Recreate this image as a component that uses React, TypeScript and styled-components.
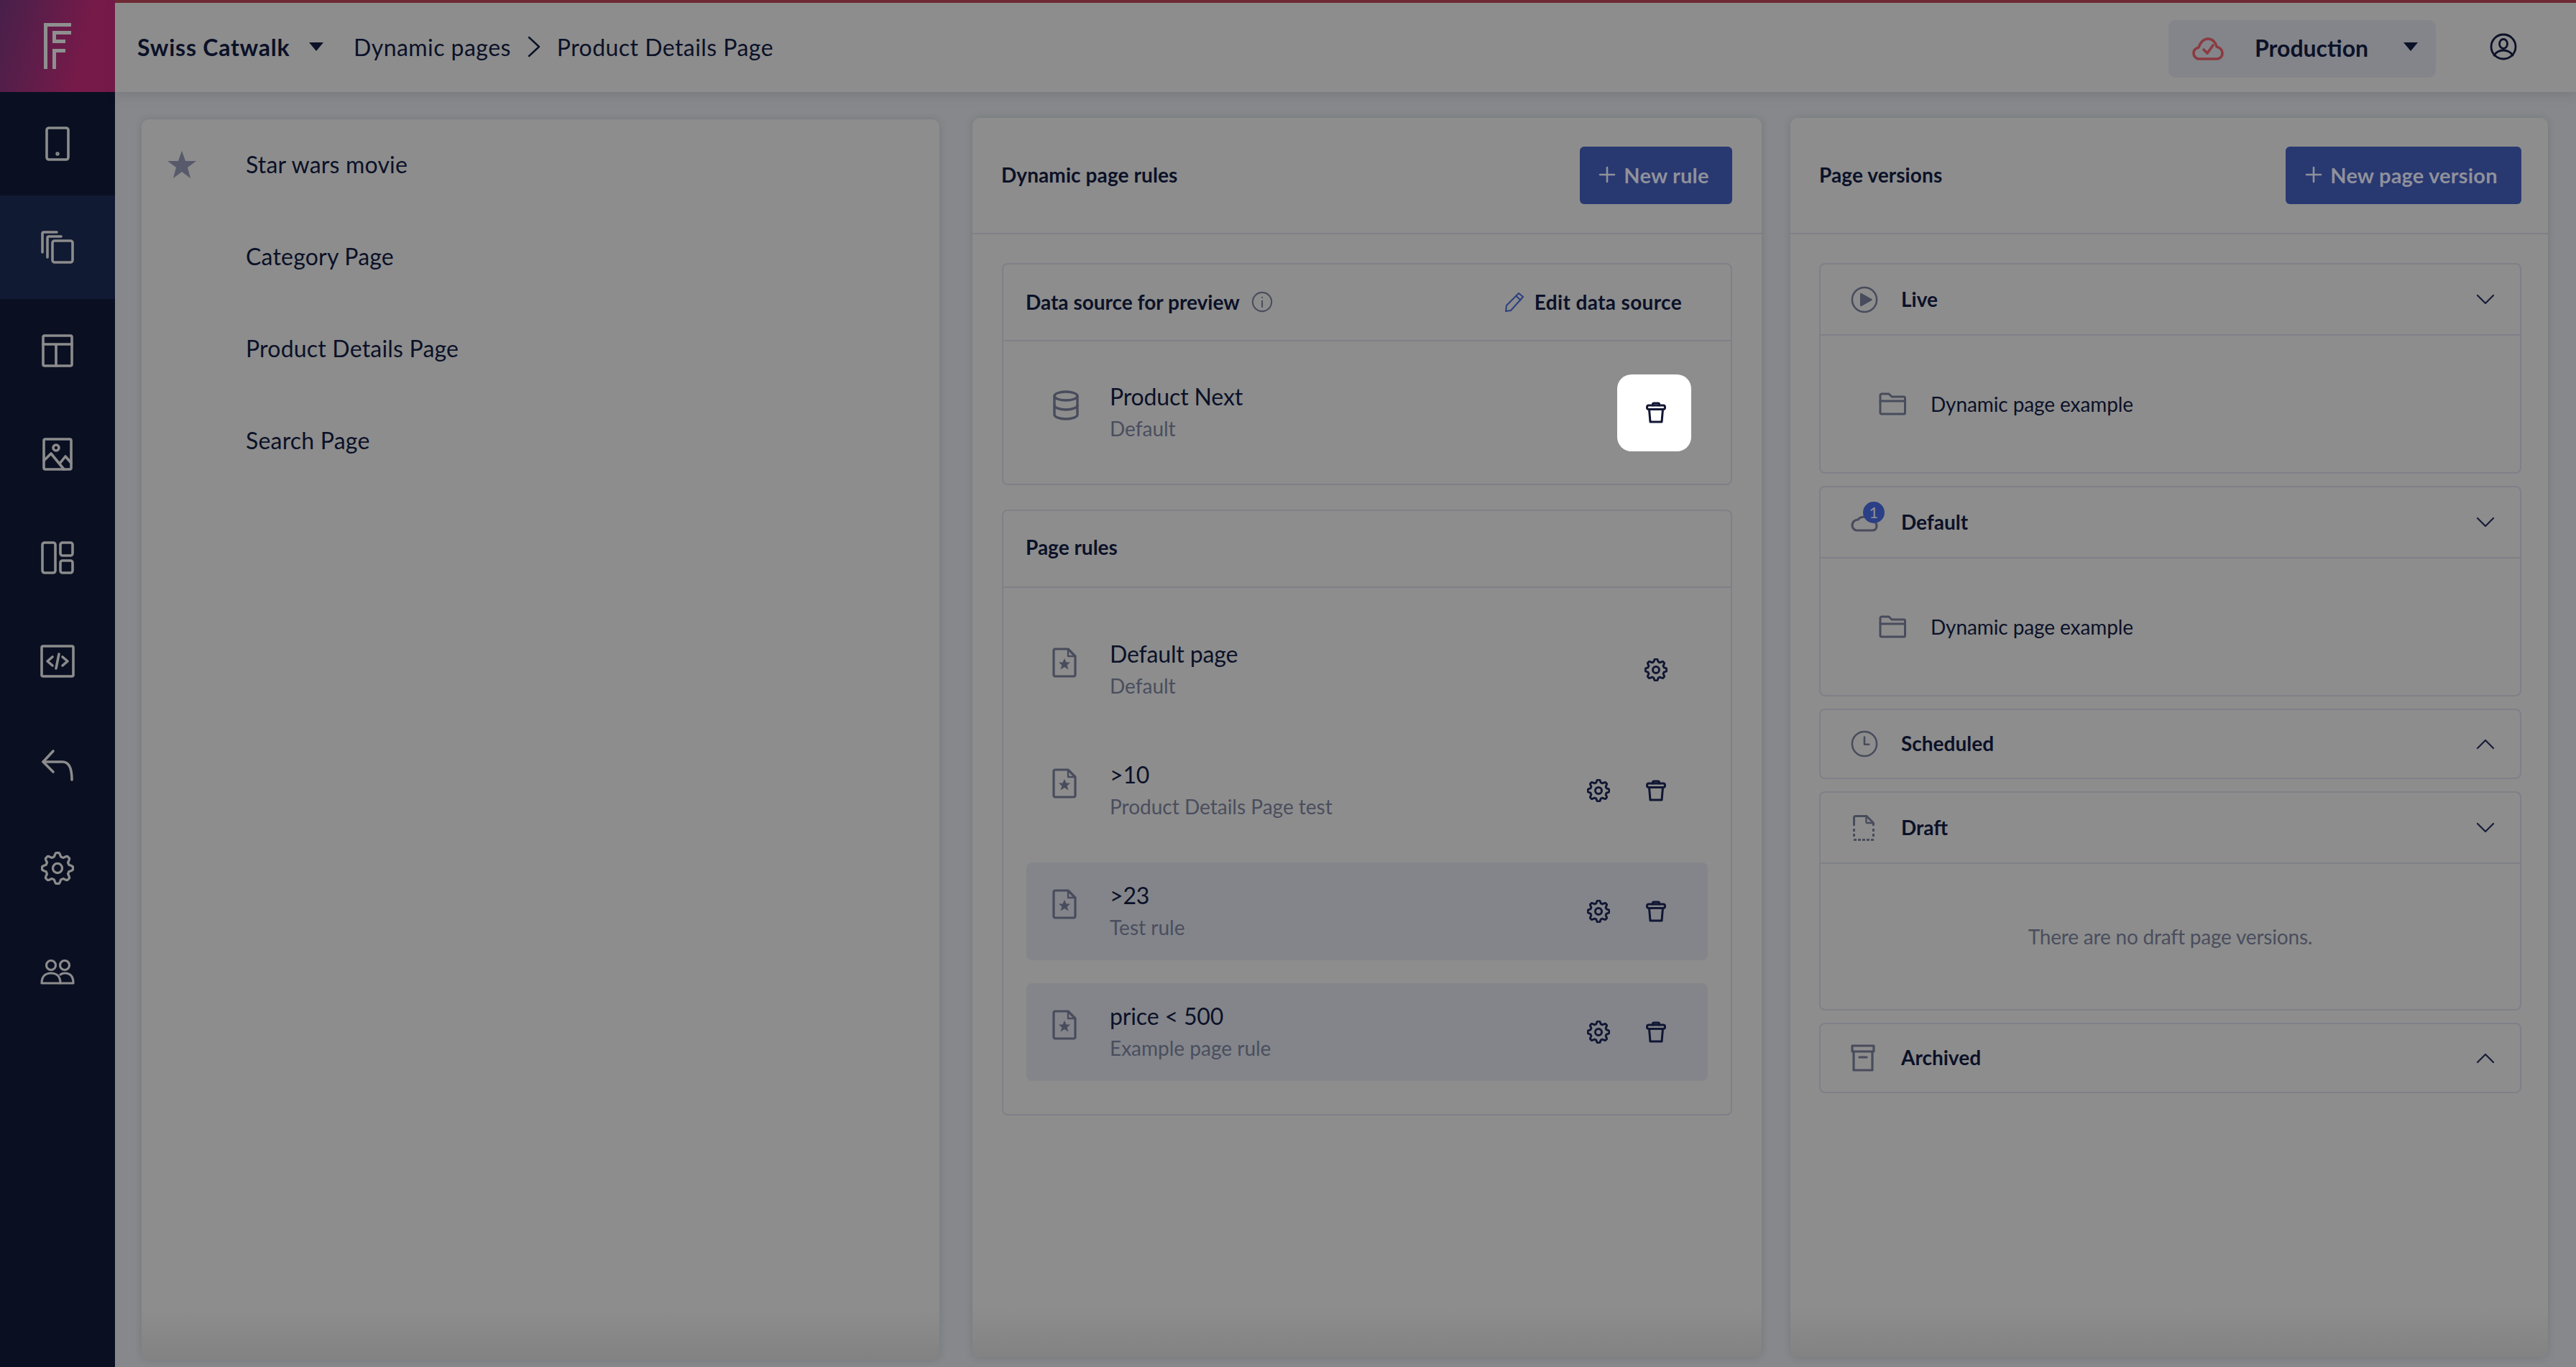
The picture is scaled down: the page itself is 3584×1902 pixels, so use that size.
import React from 'react';
import styled, { createGlobalStyle } from 'styled-components';

const GlobalStyle = createGlobalStyle`
  html, body { margin: 0; padding: 0; height: 100%; }
  body { font-family: Lato, "Noto Sans", sans-serif; background: #86888b; color: #0b1128; }
  #root { height: 100%; }
  * { box-sizing: border-box; }
`;

const Shell = styled.div`
  display: flex;
  width: 3584px;
  height: 1902px;
  overflow: hidden;
  background: #86888b;
`;

const Sidebar = styled.nav`
  flex: 0 0 160px;
  display: flex;
  flex-direction: column;
  background: #0a1022;
`;

const LogoBox = styled.div`
  height: 128px;
  display: flex;
  align-items: center;
  justify-content: center;
  background: linear-gradient(105deg, #47204a 0%, #761a49 70%);
`;

const NavItem = styled.div<{ $active?: boolean }>`
  height: 144px;
  display: flex;
  align-items: center;
  justify-content: center;
  color: #8c8c8c;
  background: ${p => (p.$active ? '#111a33' : 'transparent')};
`;

const Content = styled.div`
  flex: 1;
  display: flex;
  flex-direction: column;
  min-width: 0;
`;

const TopBar = styled.header`
  height: 128px;
  flex: none;
  display: flex;
  align-items: center;
  padding: 3px 82px 5px 31px;
  background: #8d8d8d;
  border-top: 4px solid #6e2a34;
  box-shadow: 0 4px 14px rgba(60, 62, 70, 0.18);
  position: relative;
`;

const Brand = styled.span`
  font-size: 32px;
  font-weight: 700;
  letter-spacing: 0.75px;
  width: 239px;
`;

const Caret = styled.i`
  width: 0;
  height: 0;
  border-left: 10px solid transparent;
  border-right: 10px solid transparent;
  border-top: 12px solid #0b1128;
`;

const EnvCaret = styled(Caret)`
  margin-bottom: 6px;
`;

const Crumb = styled.span<{ $first?: boolean }>`
  font-size: 32px;
  letter-spacing: 0.45px;
  margin-left: ${p => (p.$first ? 42 : 0)}px;
`;

const CrumbSep = styled.span`
  display: flex;
  padding: 0 23px;
  color: #0b1128;
`;

const Spacer = styled.div`
  flex: 1;
`;

const EnvPicker = styled.div`
  width: 372px;
  height: 80px;
  display: flex;
  align-items: center;
  margin: 6px 75px 0 0;
  padding: 0 25px 0 33px;
  border-radius: 10px;
  background: #83858a;
`;

const EnvIcon = styled.span`
  display: flex;
  color: #8b3a40;
`;

const EnvName = styled.span`
  flex: 1;
  margin: 0 0 4px 43px;
  font-size: 32px;
  font-weight: 700;
`;

const Main = styled.main`
  flex: 1;
  min-height: 0;
  display: grid;
  grid-template-columns: 1110px 1144px 1094px;
  padding: 36px 0 10px 37px;
`;

const Card = styled.section`
  background: linear-gradient(#8d8d8d calc(100% - 70px), #828282 100%);
  border-radius: 10px;
  box-shadow: 0 0 10px rgba(60, 62, 70, 0.22);
  display: flex;
  flex-direction: column;
`;

const PagesCard = styled(Card)`
  margin-top: 2px;
`;

const RulesCard = styled(Card)`
  margin: 0 0 3px 46px;
`;

const VersionsCard = styled(Card)`
  margin: 0 0 3px 40px;
`;

const PageRow = styled.div`
  height: 128px;
  display: flex;
  align-items: center;
  font-size: 32px;
  letter-spacing: 0.2px;
  padding: 0 0 3px 36px;
`;

const StarSlot = styled.span`
  flex: 0 0 109px;
  display: flex;
  color: #565a6b;
`;

const CardHead = styled.div<{ $padRight: number; $padLeft: number }>`
  height: 162px;
  flex: none;
  display: flex;
  align-items: center;
  justify-content: space-between;
  padding: 0 ${p => p.$padRight}px 0 ${p => p.$padLeft}px;
  border-bottom: 2px solid #7f8088;
`;

const CardTitle = styled.h2`
  margin: 0 0 2px;
  font-size: 28px;
  font-weight: 700;
  letter-spacing: 0.1px;
`;

const PrimaryButton = styled.div<{ $width: number }>`
  width: ${p => p.$width}px;
  height: 80px;
  display: flex;
  align-items: center;
  justify-content: center;
  gap: 11px;
  padding: 0 6px 2px 0;
  border-radius: 6px;
  background: #283871;
  color: #8f919b;
  font-size: 29px;
  font-weight: 700;
  letter-spacing: 0.2px;
`;

const RulesBody = styled.div`
  padding: 40px 41px 0;
  display: flex;
  flex-direction: column;
  gap: 34px;
`;

const Box = styled.div`
  border: 2px solid #7f8088;
  border-radius: 8px;
`;

const BoxHead = styled.div<{ $lift?: number }>`
  height: 105px;
  display: flex;
  align-items: center;
  padding: 0 68px ${p => p.$lift ?? 2}px 31px;
  font-size: 28px;
  font-weight: 700;
`;

const BoxBody = styled.div<{ $pad: number }>`
  display: flex;
  flex-direction: column;
  gap: 32px;
  padding: ${p => p.$pad}px 32px;
  border-top: 2px solid #7f8088;
`;

const InfoIcon = styled.span`
  display: flex;
  margin-left: 16px;
  color: #4a4e5e;
`;

const EditLink = styled.span`
  margin-left: auto;
  display: flex;
  align-items: center;
  gap: 14px;
  letter-spacing: 0.35px;
`;

const PencilTint = styled.span`
  display: flex;
  color: #2b3f80;
`;

const Row = styled.div<{ $selected?: boolean; $tight?: boolean }>`
  height: 136px;
  display: flex;
  align-items: center;
  padding: 0 ${p => (p.$tight ? 23 : 52)}px 0 36px;
  border-radius: 8px;
  background: ${p => (p.$selected ? '#83858a' : 'transparent')};
`;

const RowIcon = styled.span`
  flex: 0 0 80px;
  display: flex;
  color: #484c5c;
  margin-bottom: 20px;
`;

const RowText = styled.div`
  flex: 1;
  display: flex;
  flex-direction: column;
`;

const RowName = styled.div`
  font-size: 32px;
  line-height: 44px;
  letter-spacing: -0.15px;
`;

const RowSub = styled.div`
  font-size: 28px;
  line-height: 44px;
  color: #4a4e5e;
`;

const RowActions = styled.div`
  display: flex;
  align-items: center;
  gap: 40px;
`;

const ActionSlot = styled.span`
  width: 40px;
  display: flex;
  justify-content: center;
  color: #111733;
`;

const HighlightedTrash = styled.span`
  width: 103px;
  height: 107px;
  display: flex;
  align-items: center;
  justify-content: center;
  padding-left: 4px;
  border-radius: 20px;
  background: #fff;
  color: #111733;
`;

const VersionsBody = styled.div`
  padding: 40px 37px 0 40px;
  display: flex;
  flex-direction: column;
  gap: 17px;
`;

const HeadLabel = styled.span`
  flex: 1;
  font-size: 28px;
  font-weight: 700;
  padding-bottom: 2px;
`;

const AccordionHead = styled.div<{ $collapsed?: boolean }>`
  height: ${p => (p.$collapsed ? 94 : 97)}px;
  display: flex;
  align-items: center;
  padding: 0 35px 0 42px;
`;

const AccordionIcon = styled.span<{ $inset?: number }>`
  flex: 0 0 70px;
  display: flex;
  position: relative;
  padding-left: ${p => p.$inset ?? 0}px;
  color: #484c5c;
`;

const Badge = styled.span`
  position: absolute;
  left: 17px;
  top: -16px;
  width: 30px;
  height: 30px;
  display: flex;
  align-items: center;
  justify-content: center;
  border-radius: 50%;
  background: #2b3f86;
  color: #8f919b;
  font-size: 22px;
`;

const AccordionBody = styled.div<{ $height: number; $centered?: boolean }>`
  height: ${p => p.$height}px;
  display: flex;
  align-items: center;
  justify-content: ${p => (p.$centered ? 'center' : 'flex-start')};
  padding-left: ${p => (p.$centered ? 0 : 81)}px;
  border-top: 2px solid #7f8088;
`;

const FolderSlot = styled.span`
  flex: 0 0 72px;
  display: flex;
  color: #484c5c;
`;

const FolderLabel = styled.span`
  font-size: 28px;
  letter-spacing: -0.1px;
`;

const EmptyText = styled.div`
  font-size: 28px;
  letter-spacing: -0.2px;
  color: #4a4e5e;
`;

const ChevronSlot = styled.span`
  display: flex;
  color: #161c38;
`;

type IconProps = { size?: number; w?: number; h?: number; sw?: number; children: React.ReactNode; box?: string };

const Ico = ({ size = 32, w, h, sw = 2, children, box = '0 0 24 24' }: IconProps) => (
  <svg
    width={w ?? size}
    height={h ?? size}
    viewBox={box}
    fill="none"
    stroke="currentColor"
    strokeWidth={sw}
    strokeLinecap="round"
    strokeLinejoin="round"
  >
    {children}
  </svg>
);

const Logo = () => (
  <svg width="38" height="64" viewBox="0 0 38 64" fill="none" stroke="#8f8f8f" strokeWidth="5">
    <path d="M2.5 64V2.5H38" />
    <path d="M38 13.5H14.5V25.5H30" />
    <path d="M14.5 64V38.5H30" />
  </svg>
);

const PhoneIcon = () => (
  <Ico w={34} h={48} box="0 0 34 48" sw={3.6}>
    <rect x="2" y="2" width="30" height="44" rx="3" />
    <circle cx="17" cy="38" r="0.9" fill="currentColor" />
  </Ico>
);

const CopiesIcon = () => (
  <Ico w={46} h={46} box="0 0 46 46" sw={3.6}>
    <path d="M2 30V4a2 2 0 0 1 2-2H22" />
    <path d="M9 37V10a2 2 0 0 1 2-2H28" />
    <rect x="16" y="14" width="28" height="30" rx="3" />
  </Ico>
);

const LayoutIcon = () => (
  <Ico w={44} h={46} box="0 0 44 46" sw={3.6}>
    <rect x="2" y="2" width="40" height="42" rx="2" />
    <path d="M2 14H42M20 14V44" />
  </Ico>
);

const ImageIcon = () => (
  <Ico w={42} h={46} box="0 0 42 46" sw={3.6}>
    <rect x="2" y="2" width="38" height="42" rx="2" />
    <circle cx="19" cy="14" r="4" />
    <path d="M2 32L12 22L30 44M24 36L32 26L40 35" />
  </Ico>
);

const PanelsIcon = () => (
  <Ico w={46} h={46} box="0 0 46 46" sw={3.6}>
    <rect x="2" y="2" width="18" height="42" rx="3" />
    <rect x="27" y="2" width="17" height="18" rx="3" />
    <rect x="27" y="27" width="17" height="17" rx="3" />
  </Ico>
);

const CodeIcon = () => (
  <Ico w={48} h={46} box="0 0 48 46" sw={3.6}>
    <rect x="2" y="2" width="44" height="42" rx="2" />
    <path d="M17 17L10 23L17 29M31 17L38 23L31 29M26 13L22 33" />
  </Ico>
);

const ReplyIcon = () => (
  <Ico w={46} h={46} box="0 0 46 46" sw={3.6}>
    <path d="M17 4L3 19L17 33" />
    <path d="M3 19H30C38 19 43 26 43 44" />
  </Ico>
);

// cog outline with eight rounded teeth, sampled around the centre
const gearPath = (() => {
  const pts: string[] = [];
  for (let i = 0; i < 128; i++) {
    const t = (i / 128) * Math.PI * 2;
    const wave = Math.max(-1, Math.min(1, 1.5 * Math.cos(8 * t)));
    const r = 9.9 + 1.3 * wave;
    pts.push(`${(12 + r * Math.sin(t)).toFixed(2)} ${(12 - r * Math.cos(t)).toFixed(2)}`);
  }
  return `M${pts.join('L')}Z`;
})();

const GearIcon = ({ size = 46, sw = 1.7 }: { size?: number; sw?: number }) => (
  <Ico size={size} sw={sw}>
    <path d={gearPath} />
    <circle cx="12" cy="12" r="3.4" />
  </Ico>
);

const UsersIcon = () => (
  <Ico w={48} h={36} box="0 0 48 36" sw={3.2}>
    <circle cx="15" cy="9" r="6.5" />
    <circle cx="34" cy="9" r="6.5" />
    <path d="M2 34C2 24 8 20 15 20C22 20 28 24 28 34Z" />
    <path d="M28 22C30 20.5 32 20 34 20C41 20 46 24 46 34H28" />
  </Ico>
);

const StarIcon = () => (
  <svg width="40" height="38" viewBox="0 0 40 38" fill="currentColor">
    <path d="M20 0L25 14H40L28 23L32 38L20 29L8 38L12 23L0 14H15Z" />
  </svg>
);

const ChevronRight = () => (
  <Ico w={18} h={30} box="0 0 18 30" sw={2.4}>
    <path d="M2 2L16 15L2 28" />
  </Ico>
);

const PlusIcon = () => (
  <Ico size={24} sw={2.6}>
    <path d="M12 2V22M2 12H22" />
  </Ico>
);

const CloudCheck = () => (
  <Ico w={44} h={32} box="0 0 44 32" sw={3.6}>
    <path d="M10 30C5 30 2 26 2 22C2 18 5 15 9 14C11 7 16 2 22 2C28 2 33 7 34 13C39 14 42 18 42 22C42 27 38 30 34 30Z" />
    <path d="M16 17L21 22L29 11" />
  </Ico>
);

const UserCircle = () => (
  <Ico w={38} h={38} box="0 0 38 38" sw={2.8}>
    <circle cx="19" cy="19" r="17" />
    <ellipse cx="19" cy="15" rx="5.5" ry="6.5" />
    <path d="M6 31C10 25 14 24 19 24C24 24 28 25 32 31" />
  </Ico>
);

const InfoGlyph = () => (
  <Ico size={30} sw={1.7}>
    <circle cx="12" cy="12" r="10.5" />
    <path d="M12 11V17.5M12 7V7.2" />
  </Ico>
);

const PencilIcon = () => (
  <PencilTint>
    <Ico w={28} h={28} box="0 0 28 28" sw={2}>
      <path d="M20 2L26 7L9 26L2 27L3 19Z" />
      <path d="M16.5 6L22.5 11.5" />
    </Ico>
  </PencilTint>
);

const DbIcon = () => (
  <Ico w={38} h={42} box="0 0 38 42" sw={3.4}>
    <ellipse cx="19" cy="8" rx="16" ry="6" />
    <path d="M3 8V34C3 37 10 40 19 40C28 40 35 37 35 34V8" />
    <path d="M3 21C3 24 10 27 19 27C28 27 35 24 35 21" />
  </Ico>
);

const TrashIcon = () => (
  <Ico w={28} h={30} box="0 0 28 30" sw={3}>
    <path d="M9.5 5V3.5A1.5 1.5 0 0 1 11 2H17A1.5 1.5 0 0 1 18.5 3.5V5" />
    <rect x="1.5" y="5" width="25" height="5.5" rx="2.5" />
    <path d="M4.5 10.5L6 28H22L23.5 10.5" />
  </Ico>
);

const DocStar = () => (
  <svg width="34" height="42" viewBox="0 0 34 42" fill="none" stroke="currentColor" strokeWidth="3.2" strokeLinejoin="round">
    <path d="M2 4C2 3 3 2 4 2H22L32 12V38C32 39 31 40 30 40H4C3 40 2 39 2 38Z" />
    <path d="M22 2V12H32" strokeWidth="2.4" />
    <path d="M17 15L19.5 20.5H25L20.6 24.5L22.5 30.5L17 27L11.500 30.5L13.4 24.5L9 20.5H14.5Z" fill="currentColor" stroke="none" />
  </svg>
);

const PlayCircle = () => (
  <Ico size={38} sw={1.6}>
    <circle cx="12" cy="12" r="10.8" />
    <path d="M9 7L18 12L9 17Z" fill="currentColor" />
  </Ico>
);

const CloudPlain = () => (
  <Ico w={38} h={26} box="0 0 38 26" sw={3.2}>
    <path d="M9 24C5 24 2 21 2 17C2 12 6 9 10 9C14 4 22 4 26 9C32 9 36 13 36 18C36 22 33 24 30 24Z" />
  </Ico>
);

const FolderIcon = () => (
  <Ico w={38} h={32} box="0 0 38 32" sw={3}>
    <path d="M2 4C2 3 3 2 4 2H14L18 6H35C36 6 36.5 7 36.5 8V28C36.5 29.5 36 30 35 30H4C3 30 2 29.5 2 28Z" />
    <path d="M2 12H36.5" />
  </Ico>
);

const ClockIcon = () => (
  <Ico size={38} sw={1.6}>
    <circle cx="12" cy="12" r="10.8" />
    <path d="M12 6V12.5H16" />
  </Ico>
);

const DraftIcon = () => (
  <svg width="30" height="36" viewBox="0 0 30 36" fill="none" stroke="currentColor" strokeWidth="3">
    <path d="M1.5 15V3.5A2 2 0 0 1 3.5 1.5H19L28.5 11V15" />
    <path d="M18.5 2V9.5A1.5 1.5 0 0 0 20 11H28" strokeWidth="2.4" />
    <path d="M1.5 19V23M1.5 26V30M28.5 19V23M28.5 26V30" />
    <path d="M1 34.5H5M7 34.5H11M13 34.5H17M19 34.5H23M25 34.5H29" />
  </svg>
);

const ArchiveIcon = () => (
  <Ico w={34} h={38} box="0 0 34 38" sw={3.2}>
    <rect x="2" y="2" width="30" height="8" />
    <path d="M4 10V36H30V10M12 18H22" />
  </Ico>
);

const Chevron = ({ up }: { up?: boolean }) => (
  <ChevronSlot>
    <Ico w={26} h={16} box="0 0 26 16" sw={2.2}>
      <path d={up ? 'M2 14L13 3L24 14' : 'M2 2L13 13L24 2'} />
    </Ico>
  </ChevronSlot>
);

const navIcons = [
  <PhoneIcon />, <CopiesIcon />, <LayoutIcon />, <ImageIcon />, <PanelsIcon />,
  <CodeIcon />, <ReplyIcon />, <GearIcon />, <UsersIcon />,
];

const pages = ['Star wars movie', 'Category Page', 'Product Details Page', 'Search Page'];

const rules = [
  { name: 'Default page', sub: 'Default', locked: true },
  { name: '>10', sub: 'Product Details Page test' },
  { name: '>23', sub: 'Test rule', selected: true },
  { name: 'price < 500', sub: 'Example page rule', selected: true },
];

export default function App() {
  return (
    <Shell>
      <GlobalStyle />
      <Sidebar>
        <LogoBox><Logo /></LogoBox>
        {navIcons.map((icon, i) => (
          <NavItem key={i} $active={i === 1}>{icon}</NavItem>
        ))}
      </Sidebar>
      <Content>
        <TopBar>
          <Brand>Swiss Catwalk</Brand>
          <Caret />
          <Crumb $first>Dynamic pages</Crumb>
          <CrumbSep><ChevronRight /></CrumbSep>
          <Crumb>Product Details Page</Crumb>
          <Spacer />
          <EnvPicker>
            <EnvIcon><CloudCheck /></EnvIcon>
            <EnvName>Production</EnvName>
            <EnvCaret />
          </EnvPicker>
          <UserCircle />
        </TopBar>
        <Main>
          <PagesCard>
            {pages.map((p, i) => (
              <PageRow key={p}>
                <StarSlot>{i === 0 && <StarIcon />}</StarSlot>
                {p}
              </PageRow>
            ))}
          </PagesCard>
          <RulesCard>
            <CardHead $padLeft={40} $padRight={41}>
              <CardTitle>Dynamic page rules</CardTitle>
              <PrimaryButton $width={212}><PlusIcon />New rule</PrimaryButton>
            </CardHead>
            <RulesBody>
              <Box>
                <BoxHead>
                  Data source for preview
                  <InfoIcon><InfoGlyph /></InfoIcon>
                  <EditLink><PencilIcon />Edit data source</EditLink>
                </BoxHead>
                <BoxBody $pad={31}>
                  <Row $tight>
                    <RowIcon><DbIcon /></RowIcon>
                    <RowText>
                      <RowName>Product Next</RowName>
                      <RowSub>Default</RowSub>
                    </RowText>
                    <HighlightedTrash><TrashIcon /></HighlightedTrash>
                  </Row>
                </BoxBody>
              </Box>
              <Box>
                <BoxHead $lift={5}>Page rules</BoxHead>
                <BoxBody $pad={46}>
                  {rules.map(r => (
                    <Row key={r.name} $selected={r.selected}>
                      <RowIcon><DocStar /></RowIcon>
                      <RowText>
                        <RowName>{r.name}</RowName>
                        <RowSub>{r.sub}</RowSub>
                      </RowText>
                      <RowActions>
                        <ActionSlot><GearIcon size={32} sw={2.2} /></ActionSlot>
                        {!r.locked && <ActionSlot><TrashIcon /></ActionSlot>}
                      </RowActions>
                    </Row>
                  ))}
                </BoxBody>
              </Box>
            </RulesBody>
          </RulesCard>
          <VersionsCard>
            <CardHead $padLeft={40} $padRight={37}>
              <CardTitle>Page versions</CardTitle>
              <PrimaryButton $width={328}><PlusIcon />New page version</PrimaryButton>
            </CardHead>
            <VersionsBody>
              <Box>
                <AccordionHead>
                  <AccordionIcon><PlayCircle /></AccordionIcon>
                  <HeadLabel>Live</HeadLabel>
                  <Chevron />
                </AccordionHead>
                <AccordionBody $height={192}>
                  <FolderSlot><FolderIcon /></FolderSlot>
                  <FolderLabel>Dynamic page example</FolderLabel>
                </AccordionBody>
              </Box>
              <Box>
                <AccordionHead>
                  <AccordionIcon>
                    <CloudPlain />
                    <Badge>1</Badge>
                  </AccordionIcon>
                  <HeadLabel>Default</HeadLabel>
                  <Chevron />
                </AccordionHead>
                <AccordionBody $height={192}>
                  <FolderSlot><FolderIcon /></FolderSlot>
                  <FolderLabel>Dynamic page example</FolderLabel>
                </AccordionBody>
              </Box>
              <Box>
                <AccordionHead $collapsed>
                  <AccordionIcon><ClockIcon /></AccordionIcon>
                  <HeadLabel>Scheduled</HeadLabel>
                  <Chevron up />
                </AccordionHead>
              </Box>
              <Box>
                <AccordionHead>
                  <AccordionIcon $inset={3}><DraftIcon /></AccordionIcon>
                  <HeadLabel>Draft</HeadLabel>
                  <Chevron />
                </AccordionHead>
                <AccordionBody $height={204} $centered>
                  <EmptyText>There are no draft page versions.</EmptyText>
                </AccordionBody>
              </Box>
              <Box>
                <AccordionHead $collapsed>
                  <AccordionIcon><ArchiveIcon /></AccordionIcon>
                  <HeadLabel>Archived</HeadLabel>
                  <Chevron up />
                </AccordionHead>
              </Box>
            </VersionsBody>
          </VersionsCard>
        </Main>
      </Content>
    </Shell>
  );
}
